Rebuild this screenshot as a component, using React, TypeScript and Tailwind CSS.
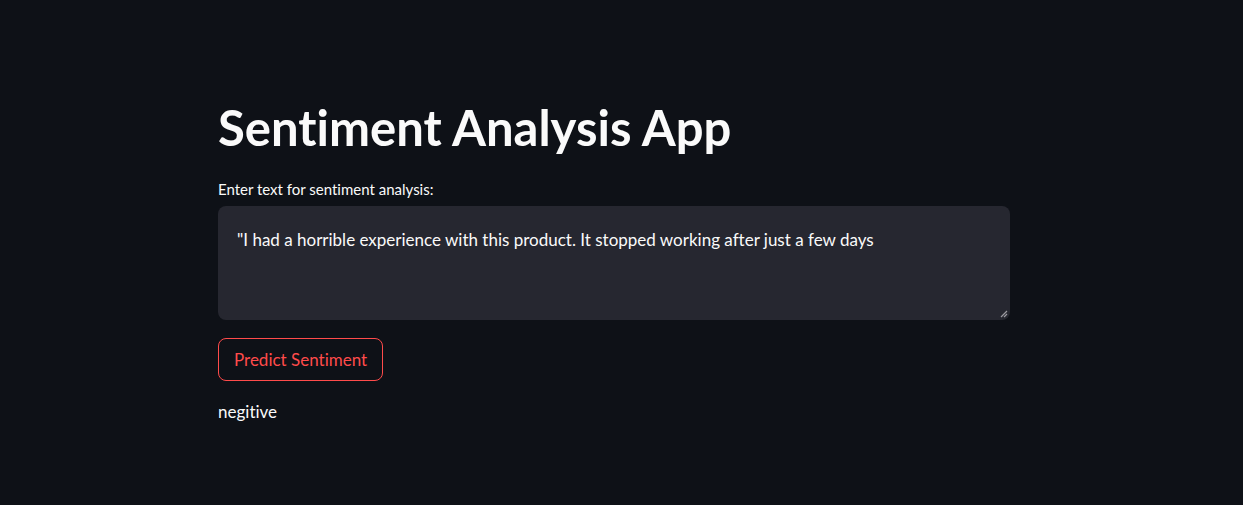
export default function App() {
  const font = { fontFamily: '"Source Sans Pro", Lato, "Noto Sans", sans-serif' };
  return (
    <div className="min-h-[505px] w-full bg-[#0e1117] text-[#fafafa] [font-variant-ligatures:none]" style={font}>
      <div className="ml-[218px] w-[792px] pt-[96px]">
        <h1 className="text-[49px] font-bold leading-[60px] py-[1px]">Sentiment Analysis App</h1>
        <div className="mt-[21px] text-[15px] leading-[20px]">Enter text for sentiment analysis:</div>
        <div className="relative mt-[7px] h-[114px] rounded-[8px] bg-[#262730] px-[19px] pt-[22px] text-[17px] leading-[24px]">
          "I had a horrible experience with this product. It stopped working after just a few days
          <svg className="absolute bottom-[2px] right-[2px]" width="9" height="9" viewBox="0 0 9 9">
            <path d="M8 2L2 8M8 5L5 8" stroke="#9a9aa0" strokeWidth="1.2" />
          </svg>
        </div>
        <button className="mt-[18px] h-[43px] rounded-[8px] border border-[#ff4b4b] px-[15px] text-[17px] text-[#ff4b4b]">
          Predict Sentiment
        </button>
        <div className="mt-[19px] text-[17px] leading-[24px]">negitive</div>
      </div>
    </div>
  );
}
